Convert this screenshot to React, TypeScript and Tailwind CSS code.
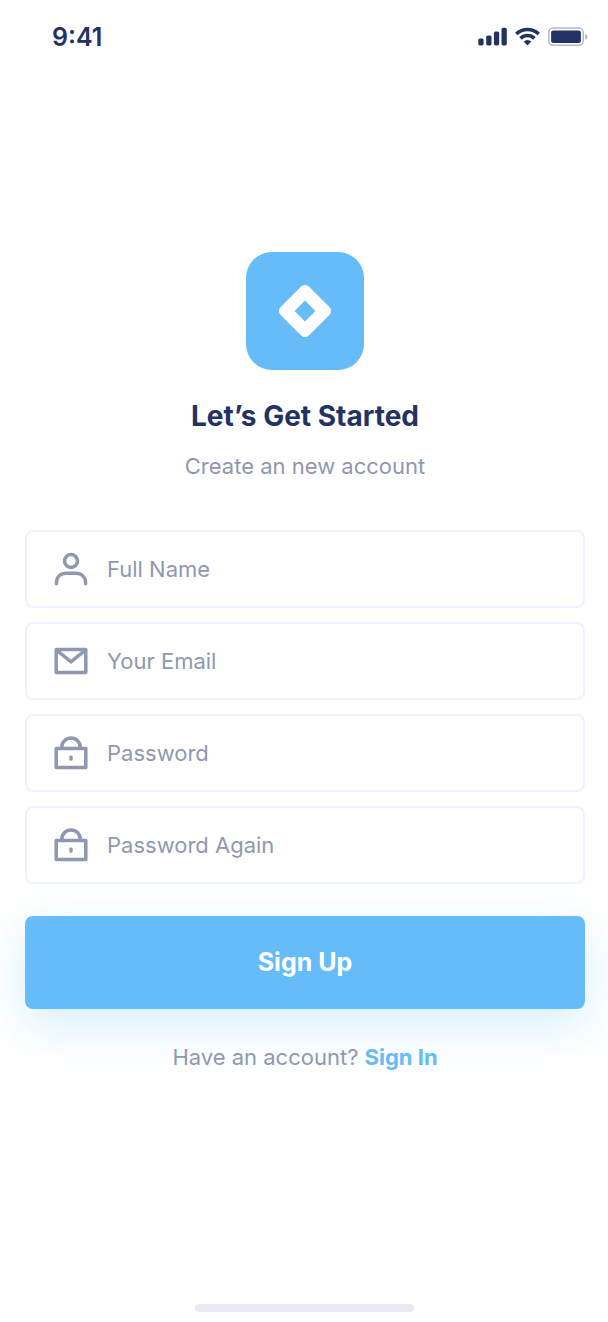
import React from "react";

type IconProps = { className?: string };

function UserIcon({ className }: IconProps) {
  return (
    <svg viewBox="0 0 34 34" fill="none" stroke="currentColor" strokeWidth="3.5" strokeLinecap="round" className={className} aria-hidden="true">
      <circle cx="17" cy="9" r="6.5" />
      <path d="M2.4 31.8 V31.2 C2.4 25 6.4 21.2 12.4 21.2 H21.6 C27.6 21.2 31.6 25 31.6 31.2 V31.8" />
    </svg>
  );
}

function MailIcon({ className }: IconProps) {
  return (
    <svg viewBox="0 0 34 34" fill="none" stroke="currentColor" strokeWidth="3.5" strokeLinejoin="round" className={className} aria-hidden="true">
      <rect x="2.2" y="5.6" width="29.6" height="22.8" />
      <path d="M2.6 6.2 L17 17.8 L31.4 6.2" strokeLinejoin="miter" />
    </svg>
  );
}

function LockIcon({ className }: IconProps) {
  return (
    <svg viewBox="0 0 34 34" fill="none" stroke="currentColor" strokeWidth="3.5" strokeLinejoin="round" className={className} aria-hidden="true">
      <rect x="2.2" y="12.6" width="29.6" height="19" />
      <path d="M7.7 12 V11.4 A9.3 9.3 0 0 1 26.3 11.4 V12" />
      <rect x="15.3" y="19.4" width="3.4" height="5.4" rx="1.4" fill="currentColor" stroke="none" />
    </svg>
  );
}

function StatusBar() {
  return (
    <header className="flex h-18 w-full items-center justify-between pr-5 pl-[52px] text-[#223263]">
      <time className="pt-0.5 text-[25px] leading-8 font-semibold">9:41</time>
      <div className="flex items-center gap-2">
        <svg viewBox="0 0 29 19" className="h-[19px] w-[29px]" fill="currentColor" aria-hidden="true">
          <rect x="0.3" y="11.6" width="5.3" height="6.8" rx="1.6" />
          <rect x="8.2" y="8.6" width="5.3" height="9.8" rx="1.6" />
          <rect x="15.9" y="4.6" width="5.3" height="13.8" rx="1.6" />
          <rect x="23.5" y="0.8" width="5.3" height="17.6" rx="1.6" />
        </svg>
        <svg viewBox="0 0 25 19" className="h-[19px] w-[25px]" fill="none" stroke="currentColor" strokeWidth="3.6" aria-hidden="true">
          <path d="M1.3 7 A16 16 0 0 1 23.7 7" />
          <path d="M5.5 11.4 A10 10 0 0 1 19.5 11.4" />
          <path d="M8.7 14.5 A5.4 5.4 0 0 1 16.3 14.5 L12.5 18.5 Z" fill="currentColor" stroke="none" />
        </svg>
        <svg viewBox="0 0 40 19" className="h-[19px] w-[40px]" fill="none" aria-hidden="true">
          <rect x="0.8" y="1" width="34.4" height="17.2" rx="4.4" stroke="currentColor" strokeOpacity="0.35" strokeWidth="1.5" />
          <rect x="3.1" y="3.4" width="29.8" height="12.5" rx="2.2" fill="currentColor" />
          <path d="M37.3 6.8 V12.6 C38.5 12.1 39.3 11 39.3 9.7 C39.3 8.4 38.5 7.3 37.3 6.8 Z" fill="currentColor" fillOpacity="0.4" />
        </svg>
      </div>
    </header>
  );
}

type FieldProps = {
  id: string;
  label: string;
  type: string;
  icon: (props: IconProps) => React.ReactElement;
};

function Field({ id, label, type, icon: Icon }: FieldProps) {
  return (
    <div className="flex h-[78px] items-center gap-[19px] rounded-lg border-2 border-[#edf2ff] bg-white px-[27px] text-[#9098b1]">
      <label htmlFor={id} aria-label={label} className="shrink-0">
        <Icon className="size-[34px]" />
      </label>
      <input
        id={id}
        name={id}
        type={type}
        aria-label={label}
        placeholder={label}
        className="h-10 min-w-0 flex-1 bg-transparent text-[22px] text-[#223263] outline-none placeholder:text-[#9098b1]"
      />
    </div>
  );
}

const fields: FieldProps[] = [
  { id: "name", label: "Full Name", type: "text", icon: UserIcon },
  { id: "email", label: "Your Email", type: "email", icon: MailIcon },
  { id: "password", label: "Password", type: "password", icon: LockIcon },
  { id: "password-again", label: "Password Again", type: "password", icon: LockIcon },
];

export default function App() {
  return (
    <div className="flex min-h-screen flex-col items-center overflow-hidden bg-white font-['Inter',sans-serif]">
      <StatusBar />
      <main className="flex w-full flex-col items-center pt-[180px] pr-[23px] pl-[25px]">
        <div className="grid size-[118px] place-items-center rounded-[26px] bg-[#66bbf9]">
          <svg viewBox="0 0 54 54" className="size-[54px]" aria-hidden="true">
            <rect x="7" y="7" width="40" height="40" rx="5.5" transform="rotate(45 27 27)" fill="#ffffff" />
            <path d="M27 16.6 L37.4 27 L27 37.4 L16.6 27 Z" fill="#66bbf9" />
          </svg>
        </div>
        <h1 className="mt-7 text-[28px] leading-9 font-bold text-[#223263]">Let’s Get Started</h1>
        <p className="mt-4 text-[22px] leading-8 text-[#9098b1]">Create an new account</p>
        <form className="mt-12 w-full" onSubmit={(event) => event.preventDefault()}>
          <div className="flex flex-col gap-[14px]">
            {fields.map((field) => (
              <Field key={field.id} {...field} />
            ))}
          </div>
          <button
            type="submit"
            className="mt-8 h-[93px] w-full rounded-lg bg-[#66bbf9] text-[25px] font-bold text-white shadow-[0_16px_48px_rgba(64,180,252,0.22)]"
          >
            Sign Up
          </button>
        </form>
        <p className="mt-8 text-[22px] leading-8 text-[#9098b1]">
          Have an account?{" "}
          <a href="#sign-in" className="font-bold text-[#66bbf9]">
            Sign In
          </a>
        </p>
      </main>
      <div className="mt-auto mb-[10px] h-2 w-[219px] rounded-full bg-[#e7eaf2]" />
    </div>
  );
}
